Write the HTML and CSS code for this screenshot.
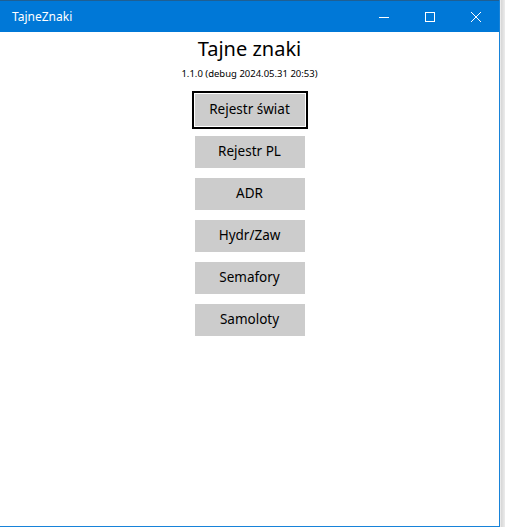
FILE: index.html
```html
<!DOCTYPE html>
<html>
<head>
<meta charset="utf-8">
<link rel="stylesheet" href="styles.css">
</head>
<body>
<div class="window">
  <div class="titlebar">
    <span class="app-name">TajneZnaki</span>
    <div class="controls">
      <span class="ctl">
        <svg width="12" height="12" viewBox="0 0 12 12"><path d="M1 6.5H11" stroke="#fff" stroke-width="1"/></svg>
      </span>
      <span class="ctl">
        <svg width="12" height="12" viewBox="0 0 12 12"><rect x="1.5" y="1.5" width="9" height="9" fill="none" stroke="#fff" stroke-width="1"/></svg>
      </span>
      <span class="ctl">
        <svg width="12" height="12" viewBox="0 0 12 12"><path d="M1 1L11 11M11 1L1 11" stroke="#fff" stroke-width="1"/></svg>
      </span>
    </div>
  </div>
  <div class="content">
    <h1 class="title">Tajne znaki</h1>
    <div class="version">1.1.0 (debug 2024.05.31 20:53)</div>
    <div class="buttons">
      <button class="btn focused">Rejestr świat</button>
      <button class="btn">Rejestr PL</button>
      <button class="btn">ADR</button>
      <button class="btn">Hydr/Zaw</button>
      <button class="btn">Semafory</button>
      <button class="btn">Samoloty</button>
    </div>
  </div>
</div>
</body>
</html>
```

FILE: styles.css
```css
html, body {
  margin: 0;
  padding: 0;
}
body {
  width: 505px;
  height: 527px;
  background: linear-gradient(to right, #ffffff 0, #ffffff 500px, #d6d6d6 501px, #ececec 505px);
  font-family: "Noto Sans", "Open Sans", sans-serif;
  overflow: hidden;
}
.window {
  width: 500px;
  height: 527px;
  box-sizing: border-box;
  border-right: 1px solid #1783d9;
  border-bottom: 1px solid #1783d9;
  background: #fff;
  display: flex;
  flex-direction: column;
}
.titlebar {
  height: 32px;
  background: #0078d7;
  border-top: 1px solid #1f5f93;
  box-sizing: border-box;
  display: flex;
  align-items: center;
  color: #fff;
}
.app-name {
  margin-left: 12px;
  font-size: 12px;
  font-family: "Noto Sans", sans-serif;
  padding-bottom: 1px;
}
.controls {
  margin-left: auto;
  display: flex;
  height: 100%;
}
.ctl {
  width: 46px;
  display: flex;
  align-items: center;
  justify-content: center;
}
.ctl svg {
  display: block;
}
.content {
  display: flex;
  flex-direction: column;
  align-items: center;
}
.title {
  margin: 3px 0 0 0;
  font-size: 20px;
  font-weight: normal;
  line-height: 28px;
  color: #000;
}
.version {
  font-size: 9.5px;
  line-height: 14px;
  margin-top: 4px;
  color: #000;
}
.buttons {
  margin-top: 13px;
  display: flex;
  flex-direction: column;
  align-items: center;
  gap: 10px;
}
.btn {
  width: 110px;
  height: 32px;
  background: #cccccc;
  border: none;
  margin: 0;
  padding: 0 0 2px 0;
  font-family: "Noto Sans", "Open Sans", sans-serif;
  font-size: 13.5px;
  color: #000;
}
.btn.focused {
  outline: 2px solid #000;
  outline-offset: 1px;
  box-shadow: 0 0 0 1px #fff;
}
```
